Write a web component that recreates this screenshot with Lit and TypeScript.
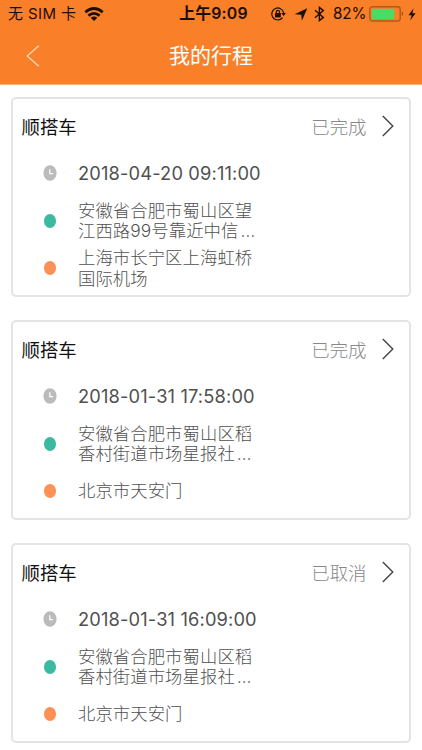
import { LitElement, html, css } from "lit";
import { customElement, property } from "lit/decorators.js";

interface Trip {
  kind: string;
  status: string;
  time: string;
  from: string[];
  to: string[];
}

const TRIPS: Trip[] = [
  {
    kind: "顺搭车",
    status: "已完成",
    time: "2018-04-20 09:11:00",
    from: ["安徽省合肥市蜀山区望", "江西路99号靠近中信…"],
    to: ["上海市长宁区上海虹桥", "国际机场"],
  },
  {
    kind: "顺搭车",
    status: "已完成",
    time: "2018-01-31 17:58:00",
    from: ["安徽省合肥市蜀山区稻", "香村街道市场星报社…"],
    to: ["北京市天安门"],
  },
  {
    kind: "顺搭车",
    status: "已取消",
    time: "2018-01-31 16:09:00",
    from: ["安徽省合肥市蜀山区稻", "香村街道市场星报社…"],
    to: ["北京市天安门"],
  },
];

@customElement("status-bar")
class StatusBar extends LitElement {
  static styles = css`
    :host {
      display: grid;
      grid-template-columns: 1fr auto 1fr;
      align-items: center;
      height: 28px;
      padding: 0 6px 0 8px;
      color: #1d0d02;
      font-size: 15px;
      line-height: 28px;
      white-space: nowrap;
    }
    .side {
      display: flex;
      align-items: center;
    }
    .right {
      justify-content: flex-end;
    }
    .carrier {
      letter-spacing: 0.4px;
    }
    .clock {
      font-weight: 600;
      font-size: 15.8px;
      letter-spacing: 0.2px;
      padding-left: 3px;
    }
    svg {
      display: block;
      flex: none;
    }
    .wifi {
      margin-left: 8px;
    }
    .arrow {
      margin-left: 8px;
    }
    .bt {
      margin-left: 6px;
    }
    .pct {
      margin: 0 4px 0 8px;
      width: 32px;
      font-size: 15.2px;
      letter-spacing: -0.1px;
    }
    .bolt {
      margin-left: 4px;
    }
  `;
  render() {
    return html`
      <div class="side">
        <span class="carrier">无 SIM 卡</span>
        <svg class="wifi" width="20" height="14" viewBox="0 0 20 14" fill="none" stroke="#1d0d02" stroke-width="2.8">
          <path d="M1.3 5.2 Q10 -2.1 18.7 5.2" />
          <path d="M4.4 8.7 Q10 4.1 15.6 8.7" />
          <path d="M10 13.9 L6.7 10.8 Q10 8.2 13.3 10.8 Z" fill="#1d0d02" stroke="none" />
        </svg>
      </div>
      <span class="clock">上午9:09</span>
      <div class="side right">
        <svg width="15" height="14" viewBox="0 0 15 14" fill="none" stroke="#1d0d02" stroke-width="1.2">
          <path d="M11.6 10.6 A6 6 0 1 1 12.7 5.9" />
          <path d="M10.2 6 h4.8 l-2.4 3z" fill="#1d0d02" stroke="none" />
          <rect x="4" y="6.1" width="5.8" height="4.3" fill="#1d0d02" stroke="none" />
          <path d="M5.3 6.4 V5 a1.6 1.6 0 0 1 3.2 0 V6.4" />
        </svg>
        <svg class="arrow" width="14" height="13" viewBox="0 0 14 13">
          <path d="M13.3 0.3 L7.9 12.8 L7.3 6.7 L0.6 6.2 Z" fill="#1d0d02" />
        </svg>
        <svg class="bt" width="11" height="16" viewBox="0 0 11 16" fill="none" stroke="#1d0d02" stroke-width="1.4">
          <path d="M1 4.3 L9.4 11.4 L5.4 14.6 V1.4 L9.4 4.6 L1 11.7" />
        </svg>
        <span class="pct">82%</span>
        <svg width="35" height="16" viewBox="0 0 35 16">
          <rect x="0.8" y="0.8" width="30.4" height="14.2" rx="2.6" fill="none" stroke="#b0591a" stroke-width="1.4" />
          <rect x="2.8" y="2.8" width="22.4" height="10.2" fill="#4cd964" />
          <path d="M32.8 5.3 q2.4 2.5 0 5z" fill="#8a4513" />
        </svg>
        <svg class="bolt" width="8" height="13" viewBox="0 0 8 13">
          <path d="M5.6 0.3 L0.5 7.2 H3.7 L2.2 12.6 L7.6 5.2 H4.4 Z" fill="#1d0d02" />
        </svg>
      </div>
    `;
  }
}

@customElement("trip-card")
class TripCard extends LitElement {
  @property({ attribute: false }) trip!: Trip;

  static styles = css`
    :host {
      display: block;
      box-sizing: border-box;
      height: 199.5px;
      padding-top: 3.5px;
      border: 2px solid #e4e4e4;
      border-radius: 5px;
      background: #fff;
    }
    .head,
    .row {
      display: flex;
      align-items: center;
      height: 47.3px;
    }
    .head {
      padding: 0 15.5px 0 8.5px;
      font-size: 18.4px;
    }
    .kind {
      flex: 1;
      color: #111;
    }
    .status {
      color: #888;
      margin-right: 15px;
      font-weight: 300;
    }
    svg {
      display: block;
      flex: none;
    }
    .mark {
      width: 73px;
      display: flex;
      justify-content: center;
      margin-right: -8px;
      flex: none;
    }
    .dot {
      width: 12px;
      height: 13.5px;
      border-radius: 50%;
    }
    .from {
      background: #3cb9a1;
      margin-top: 1px;
    }
    .to {
      background: #fc9155;
    }
    .time {
      font-size: 18.3px;
      letter-spacing: 0.14px;
      color: #505050;
      font-feature-settings: "calt" 0;
    }
    .place {
      font-size: 17.35px;
      letter-spacing: 0.08px;
      line-height: 20.5px;
      padding-top: 1.2px;
      color: #505050;
      font-weight: 300;
      white-space: nowrap;
    }
    .more {
      margin-left: 2px;
    }
  `;

  private line(text: string) {
    return text.endsWith("…")
      ? html`<div>${text.slice(0, -1)}<span class="more">…</span></div>`
      : html`<div>${text}</div>`;
  }

  private place(kind: string, lines: string[]) {
    return html`<div class="row">
      <div class="mark"><i class="dot ${kind}"></i></div>
      <div class="place">${lines.map((l) => this.line(l))}</div>
    </div>`;
  }

  render() {
    const t = this.trip;
    return html`
      <div class="head">
        <span class="kind">${t.kind}</span>
        <span class="status">${t.status}</span>
        <svg width="12" height="22" viewBox="0 0 12 22" fill="none" stroke="#444" stroke-width="1.4">
          <path d="M0.8 1 L10.8 11 L0.8 21" />
        </svg>
      </div>
      <div class="row">
        <div class="mark">
          <svg width="14" height="16" viewBox="0 0 14 16">
            <ellipse cx="7" cy="8" rx="6.6" ry="7.8" fill="#bbb" />
            <path d="M6.8 4.2 V8.6 H10" fill="none" stroke="#fff" stroke-width="1.2" />
          </svg>
        </div>
        <span class="time">${t.time}</span>
      </div>
      ${this.place("from", t.from)} ${this.place("to", t.to)}
    `;
  }
}

@customElement("app-root")
class AppRoot extends LitElement {
  static styles = css`
    :host {
      display: block;
      height: 750px;
      overflow: hidden;
      background: #fff;
      font-family: Inter, "Noto Sans CJK SC", sans-serif;
    }
    .top {
      background: #f97f28;
      height: 84px;
      border-bottom: 1px solid #fbb27c;
      box-sizing: content-box;
    }
    .nav {
      display: grid;
      grid-template-columns: 60px 1fr 60px;
      align-items: center;
      height: 56px;
      color: #fff;
    }
    .back {
      display: block;
      margin-left: 26px;
    }
    .title {
      text-align: center;
      font-size: 21px;
      line-height: 56px;
    }
    .list {
      display: flex;
      flex-direction: column;
      gap: 23.5px;
      padding: 12px 11px 0;
    }
  `;
  render() {
    return html`
      <div class="top">
        <status-bar></status-bar>
        <div class="nav">
          <svg class="back" width="14" height="22" viewBox="0 0 14 22" fill="none" stroke="#ffd9bd" stroke-width="1.3">
            <path d="M12.8 0.8 L1.2 11 L12.8 21.2" />
          </svg>
          <span class="title">我的行程</span>
        </div>
      </div>
      <div class="list">${TRIPS.map((t) => html`<trip-card .trip=${t}></trip-card>`)}</div>
    `;
  }
}
